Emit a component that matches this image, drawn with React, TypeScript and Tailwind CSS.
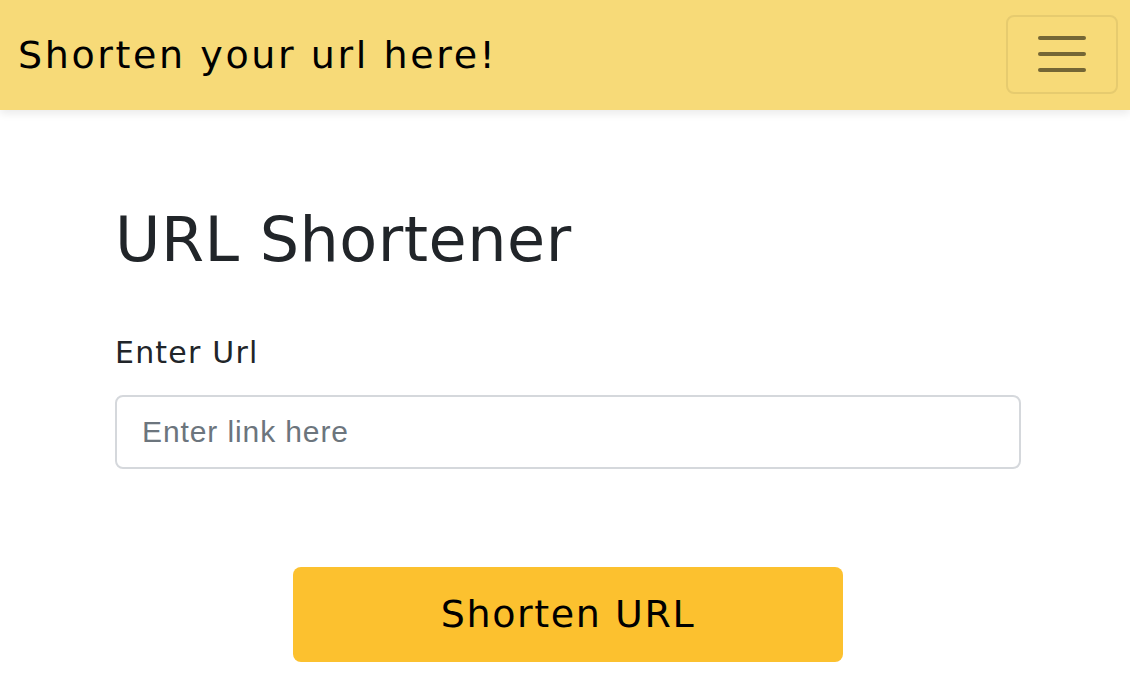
export default function App() {
  return (
    <div className="min-h-[692px] w-[1130px] bg-white" style={{ fontFamily: '"DejaVu Sans", sans-serif' }}>
      <nav className="flex h-[110px] items-center justify-between bg-[#f7da78] pl-[18px] pr-[12px] shadow-[0_4px_8px_rgba(0,0,0,0.08)]">
        <span className="text-[38px] leading-none tracking-[2.6px] text-black">Shorten your url here!</span>
        <button className="mt-[-2px] flex h-[79px] w-[112px] flex-col items-center justify-center gap-[12px] rounded-[8px] border-2 border-[#e6cb6f]">
          <span className="h-[4px] w-[48px] rounded-full bg-[#746635]" />
          <span className="h-[4px] w-[48px] rounded-full bg-[#746635]" />
          <span className="h-[4px] w-[48px] rounded-full bg-[#746635]" />
        </button>
      </nav>
      <main className="ml-[115px] flex w-[906px] flex-col pt-[99px]">
        <h1 className="text-[62px] leading-none tracking-[0.5px] text-[#212529]">URL Shortener</h1>
        <label className="mt-[67px] text-[30px] leading-none tracking-[1.2px] text-[#212529]">Enter Url</label>
        <input
          placeholder="Enter link here"
          className="mt-[27px] h-[74px] w-[906px] rounded-[8px] border-2 border-[#d5d8dc] px-[25px] text-[30px] tracking-[0.9px] placeholder:text-[#6c757d] outline-none"
          style={{ fontFamily: '"Liberation Sans", Arial, sans-serif' }}
        />
        <div className="flex justify-center pt-[98px]">
          <button className="h-[95px] w-[550px] rounded-[8px] bg-[#fcc12f] text-[38px] tracking-[1.6px] text-black">Shorten URL</button>
        </div>
      </main>
    </div>
  );
}
